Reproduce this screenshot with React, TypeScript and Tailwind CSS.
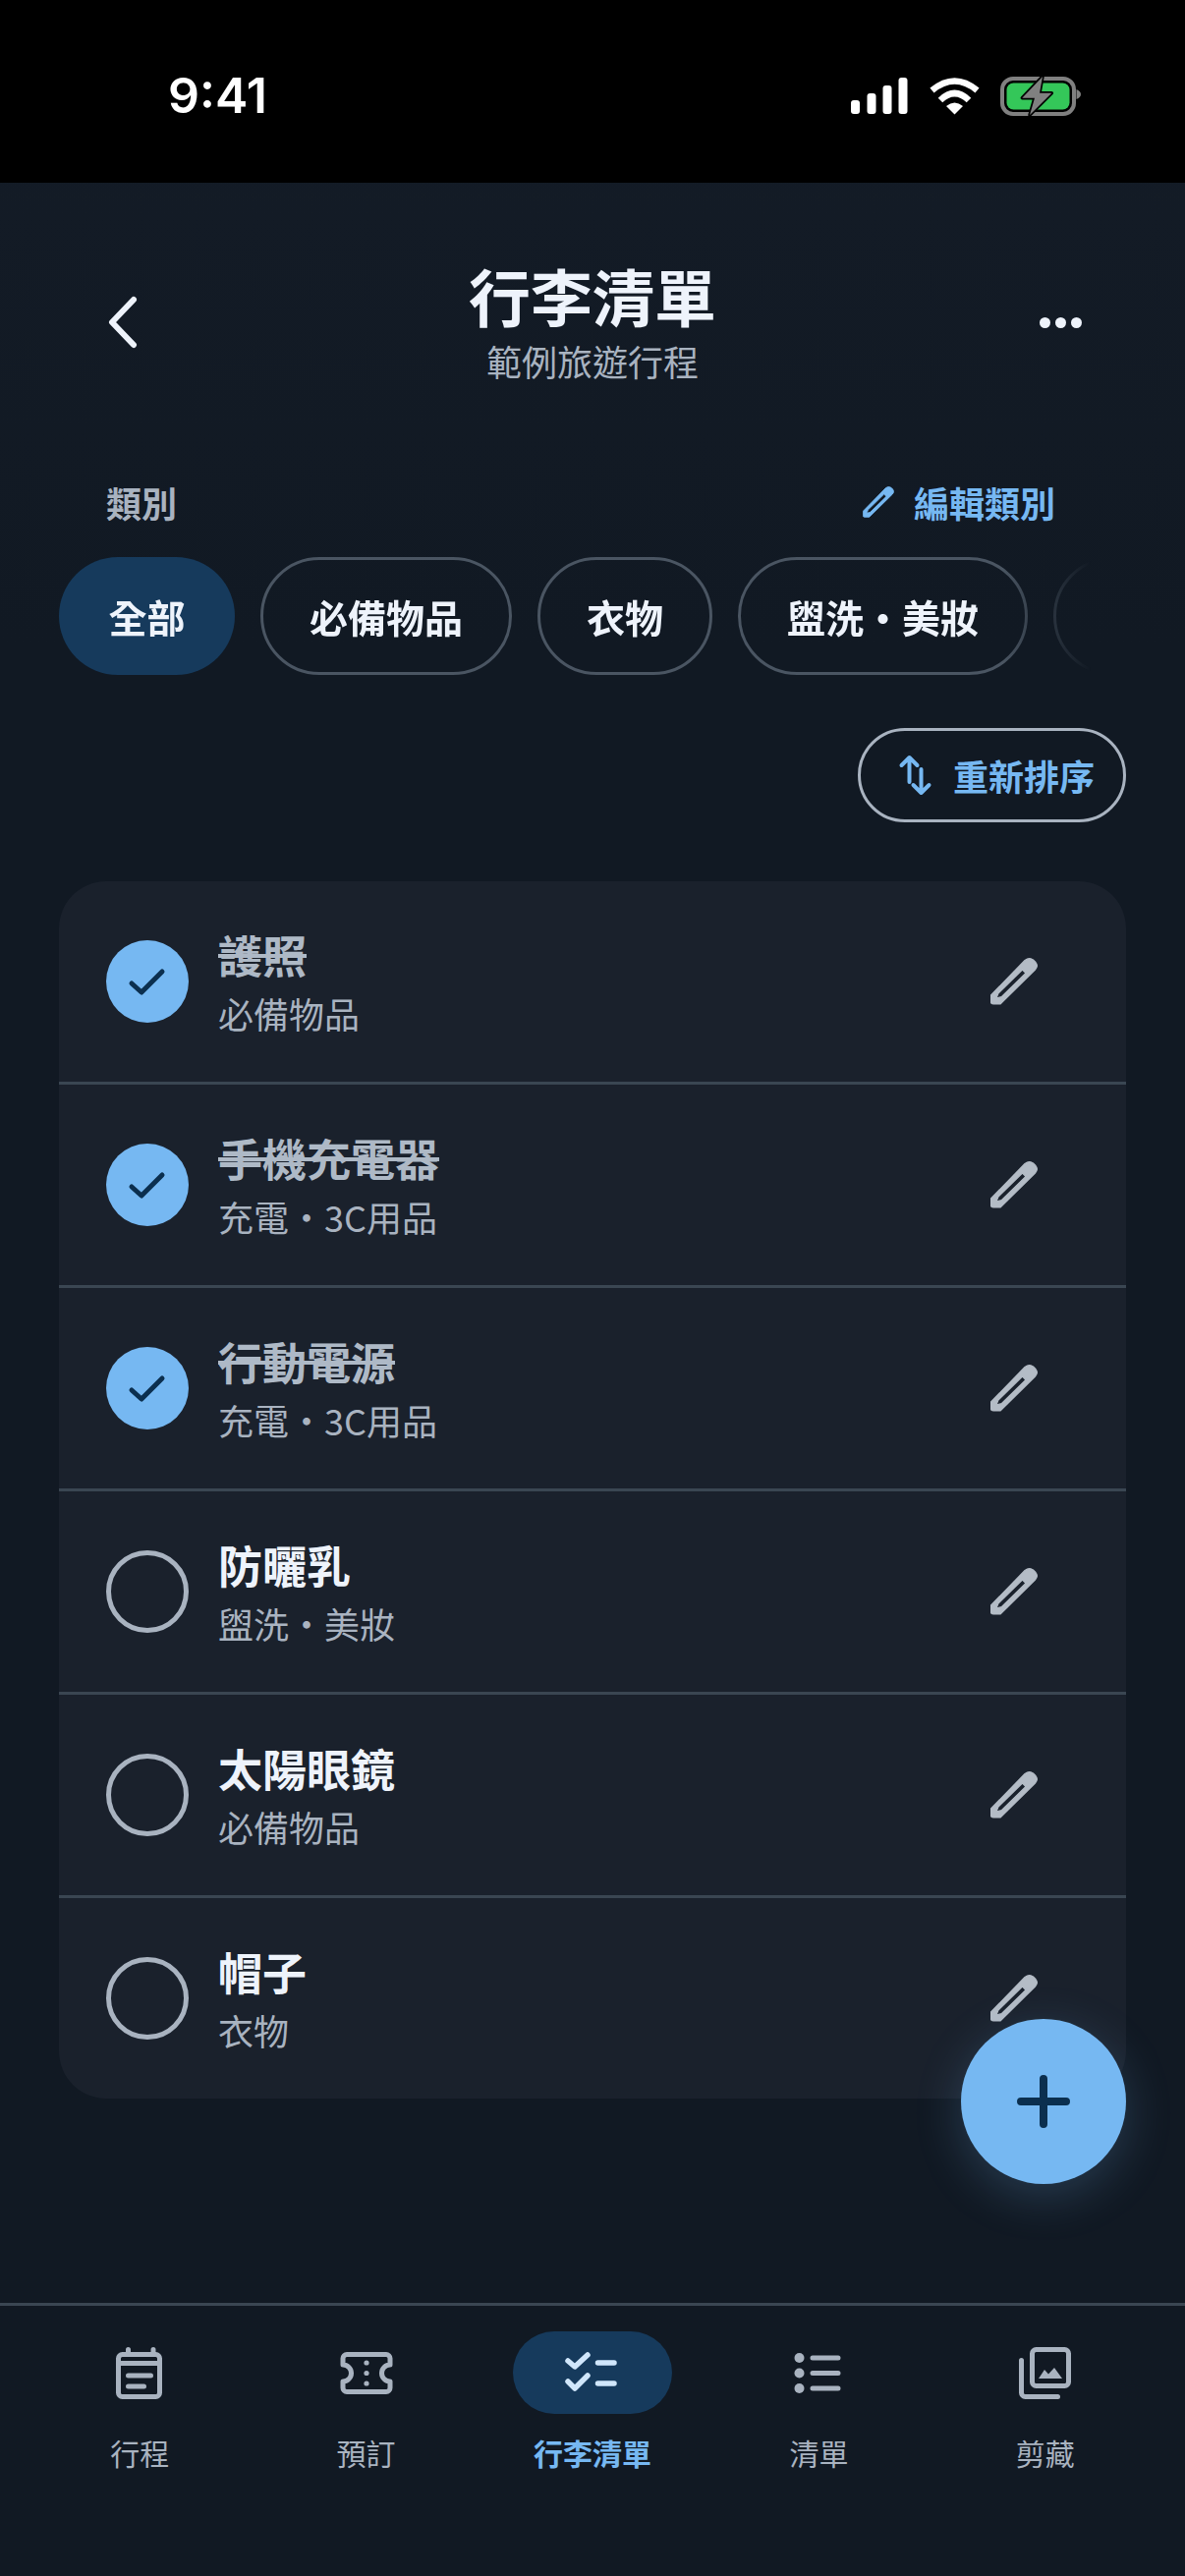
import React from 'react';

interface PackItem {
  name: string;
  category: string;
  done: boolean;
}

const items: PackItem[] = [
  { name: '護照', category: '必備物品', done: true },
  { name: '手機充電器', category: '充電・3C用品', done: true },
  { name: '行動電源', category: '充電・3C用品', done: true },
  { name: '防曬乳', category: '盥洗・美妝', done: false },
  { name: '太陽眼鏡', category: '必備物品', done: false },
  { name: '帽子', category: '衣物', done: false },
];

const chips = ['必備物品', '衣物', '盥洗・美妝'];

const PENCIL =
  'M0.5 38 L35 2.5 Q39.5 -1 43.5 2 L46 4.5 Q49 8.5 45.5 12 L10 47 L3 47 Q0.5 47 0.5 44.5 Z M8 36 L32.5 12 L36 15.5 L11.5 39.5 L6 41 Z';

const Pencil: React.FC<{ className: string }> = ({ className }) => (
  <svg viewBox="0 0 48 48" className={className} fill="currentColor" fillRule="evenodd" stroke="currentColor" strokeWidth="1.2" strokeLinejoin="round">
    <path d={PENCIL} />
  </svg>
);

// status bar glyphs
const StatusIcons = () => (
  <div className="flex items-center">
    <svg width="58" height="38" viewBox="0 0 58 38" fill="#fff">
      <rect x="0" y="23" width="9" height="14" rx="3" />
      <rect x="16.5" y="16" width="9" height="21" rx="3" />
      <rect x="32.5" y="8" width="9" height="29" rx="3" />
      <rect x="48.5" y="0" width="9" height="37" rx="3" />
    </svg>
    <svg width="51" height="38" viewBox="0 0 51 38" className="ml-[22px]">
      <path d="M2.5 13 Q25.5 -6 48.5 13" stroke="#fff" strokeWidth="6.5" fill="none" />
      <path d="M11 23 Q25.5 9 40 23" stroke="#fff" strokeWidth="6.5" fill="none" />
      <path d="M17 29 Q25.5 22 34 29 L25.5 37.5 Z" fill="#fff" />
    </svg>
    <svg width="84" height="46" viewBox="0 0 84 46" className="ml-[21px]">
      <rect x="2" y="5" width="73" height="36" rx="11" stroke="#808080" strokeWidth="4" fill="none" />
      <rect x="6.5" y="9.5" width="64" height="27" rx="7" fill="#34c759" />
      <path d="M77.5 16 Q82 18 82 21 Q82 24 77.5 26 Z" fill="#808080" />
      <path d="M43 3 L22.3 24.7 L35 24.7 L30 42 L52.3 19.7 L40 19.7 Z" fill="#808080" stroke="#000" strokeWidth="3.5" paintOrder="stroke" strokeLinejoin="round" />
    </svg>
  </div>
);

const navIcons: Record<string, React.ReactNode> = {
  calendar: (
    <>
      <rect x="8.5" y="11.5" width="42" height="43" rx="4" />
      <path d="M8.5 20.5 H50.5" />
      <path d="M18.5 6.5 V11 M44 6.5 V11" />
      <path d="M18.5 33 H41.5 M18.5 44 H34.5" />
    </>
  ),
  ticket: (
    <>
      <path d="M10 11.5 H50 a4 4 0 0 1 4 4 V22 a8.5 8.5 0 0 0 0 17 V45.5 a4 4 0 0 1 -4 4 H10 a4 4 0 0 1 -4 -4 V39 a8.5 8.5 0 0 0 0 -17 V15.5 a4 4 0 0 1 4 -4 Z" />
      <circle cx="30" cy="20" r="2.6" fill="currentColor" stroke="none" />
      <circle cx="30" cy="30.5" r="2.6" fill="currentColor" stroke="none" />
      <circle cx="30" cy="41" r="2.6" fill="currentColor" stroke="none" />
    </>
  ),
  check: (
    <>
      <path d="M5 18 L12 24 L25 12 M5 39 L12 46 L25 33" strokeWidth="5.5" />
      <path d="M35.5 20 H52 M35.5 41 H52" strokeWidth="5.5" />
    </>
  ),
  list: (
    <>
      <circle cx="10.5" cy="15" r="5" fill="currentColor" stroke="none" />
      <circle cx="10.5" cy="30.5" r="5" fill="currentColor" stroke="none" />
      <circle cx="10.5" cy="46" r="5" fill="currentColor" stroke="none" />
      <path d="M24 15 H50 M24 30.5 H50 M24 46 H50" />
    </>
  ),
  gallery: (
    <>
      <rect x="16.5" y="6.5" width="37" height="37" rx="4" />
      <path d="M5.5 17.5 V50.5 a4 4 0 0 0 4 4 H42.5" />
      <path d="M23 36 L29 27 L33 31.5 L39 25 L47 36 Z" fill="currentColor" stroke="none" />
    </>
  ),
};

const tabs = [
  { key: 'calendar', label: '行程' },
  { key: 'ticket', label: '預訂' },
  { key: 'check', label: '行李清單', active: true },
  { key: 'list', label: '清單' },
  { key: 'gallery', label: '剪藏' },
];

export default function App() {
  return (
    <div className="w-[1206px] h-[2622px] flex flex-col overflow-hidden bg-[linear-gradient(#141c27,#111923_25%)] font-['Noto_Sans_CJK_TC','Noto_Sans',sans-serif]">
      {/* status bar */}
      <div className="h-[186px] shrink-0 bg-black flex items-start justify-between pl-[171px] pr-[104px] pt-[65px]">
        <span className="text-[50px] leading-[64px] font-semibold text-white font-['Inter',sans-serif]">9:41</span>
        <div className="pt-[10px]">
          <StatusIcons />
        </div>
      </div>

      {/* header */}
      <div className="flex items-center justify-between px-[104px] pt-[78px]">
        <div className="w-[44px] pl-[4px]">
          <svg width="32" height="56" viewBox="0 0 32 56" fill="none" stroke="#eef3fb" strokeWidth="6" strokeLinecap="round" strokeLinejoin="round">
            <path d="M28 5 L6 28 L28 51" />
          </svg>
        </div>
        <div className="flex flex-col items-center">
          <h1 className="text-[63px] leading-[72px] font-bold text-[#eef3fb]">行李清單</h1>
          <p className="text-[36px] leading-[50px] mt-[6px] text-[#a9b3c0]">範例旅遊行程</p>
        </div>
        <div className="flex gap-[5px] w-[44px]">
          <span className="w-[11px] h-[11px] rounded-full bg-[#eef3fb]" />
          <span className="w-[11px] h-[11px] rounded-full bg-[#eef3fb]" />
          <span className="w-[11px] h-[11px] rounded-full bg-[#eef3fb]" />
        </div>
      </div>

      {/* categories */}
      <div className="flex items-center justify-between pl-[108px] pr-[132px] mt-[94px]">
        <span className="text-[36px] leading-[50px] font-bold text-[#a9b3c0]">類別</span>
        <div className="flex items-center gap-[20px] text-[#76b8f2]">
          <Pencil className="w-[32px] h-[32px]" />
          <span className="text-[36px] leading-[50px] font-bold">編輯類別</span>
        </div>
      </div>
      <div className="flex gap-[26px] pl-[60px] mt-[31px] overflow-hidden [mask-image:linear-gradient(to_right,black_1020px,transparent_1110px)]">
        <div className="h-[120px] shrink-0 px-[50.5px] rounded-full bg-[#163a5c] flex items-center text-[39px] font-bold text-[#eef3fb]">全部</div>
        {chips.map((chip) => (
          <div key={chip} className="h-[120px] shrink-0 px-[47px] rounded-full border-[3px] border-[#4a5562] flex items-center text-[39px] font-bold text-[#eef3fb] whitespace-nowrap">
            {chip}
          </div>
        ))}
        {/* next chip, scrolled out behind the fade */}
        <div className="h-[120px] w-[200px] shrink-0 rounded-full border-[3px] border-[#4a5562]" />
      </div>

      {/* reorder */}
      <div className="flex justify-end pr-[60px] mt-[54px]">
        <div className="h-[96px] pl-[37px] pr-[29px] rounded-full border-[3px] border-[#a9b3c0] flex items-center gap-[17px] text-[#76b8f2]">
          <svg width="40" height="46" viewBox="0 0 40 46" fill="none" stroke="currentColor" strokeWidth="4" strokeLinecap="round" strokeLinejoin="round">
            <path d="M12.5 30 V5 M4.5 13 L12.5 5 L20.5 13" />
            <path d="M24.5 17 V41 M16.5 33 L24.5 41 L32.5 33" />
          </svg>
          <span className="text-[36px] leading-[50px] font-bold">重新排序</span>
        </div>
      </div>

      {/* packing list */}
      <div className="relative mx-[60px] mt-[60px]">
        <div className="rounded-[48px] bg-[#1a212c] overflow-hidden">
          {items.map((item, i) => (
            <div key={item.name} className={`flex items-center pl-[48px] pr-[90px] ${i < items.length - 1 ? 'h-[207px] border-b-[3px] border-[#3a4652]' : 'h-[204px]'}`}>
              {item.done ? (
                <div className="w-[84px] h-[84px] rounded-full bg-[#76b8f2] flex items-center justify-center shrink-0">
                  <svg width="40" height="32" viewBox="0 0 40 32" fill="none" stroke="#0b2f4f" strokeWidth="5" strokeLinecap="round" strokeLinejoin="round">
                    <path d="M4 18 L14 27 L35 6" />
                  </svg>
                </div>
              ) : (
                <div className="w-[84px] h-[84px] rounded-full border-[5px] border-[#a9b3c0] shrink-0" />
              )}
              <div className="ml-[30px] flex-1">
                <p className={`text-[45px] leading-[58px] font-bold ${item.done ? 'text-[#aeb9c6] line-through' : 'text-[#eef3fb]'}`}>{item.name}</p>
                <p className="text-[36px] leading-[50px] mt-[5px] text-[#a9b3c0]">{item.category}</p>
              </div>
              <Pencil className="w-[48px] h-[48px] text-[#b4bcc6]" />
            </div>
          ))}
        </div>
        <button className="absolute right-0 bottom-[-87px] w-[168px] h-[168px] rounded-full bg-[#76b8f2] flex items-center justify-center shadow-[0_12px_48px_rgba(118,184,242,0.22)]">
          <svg width="54" height="54" viewBox="0 0 54 54" fill="none" stroke="#0b2f4f" strokeWidth="8" strokeLinecap="round">
            <path d="M27 4 V50 M4 27 H50" />
          </svg>
        </button>
      </div>

      {/* bottom nav */}
      <nav className="mt-auto h-[278px] border-t-[3px] border-[#3a4652] grid grid-cols-5 px-[27px] pt-[26px]">
        {tabs.map((tab) => (
          <div key={tab.key} className="flex flex-col items-center">
            <div className={`w-[162px] h-[84px] rounded-full flex items-center justify-center ${tab.active ? 'bg-[#163a5c] text-[#d0e6fb]' : 'text-[#a9b3c0]'}`}>
              <svg width="60" height="60" viewBox="0 0 60 60" fill="none" stroke="currentColor" strokeWidth="5" strokeLinecap="round" strokeLinejoin="round">
                {navIcons[tab.key]}
              </svg>
            </div>
            <span className={`mt-[19px] text-[30px] leading-[40px] ${tab.active ? 'font-bold text-[#76b8f2]' : 'text-[#a9b3c0]'}`}>{tab.label}</span>
          </div>
        ))}
      </nav>
    </div>
  );
}
